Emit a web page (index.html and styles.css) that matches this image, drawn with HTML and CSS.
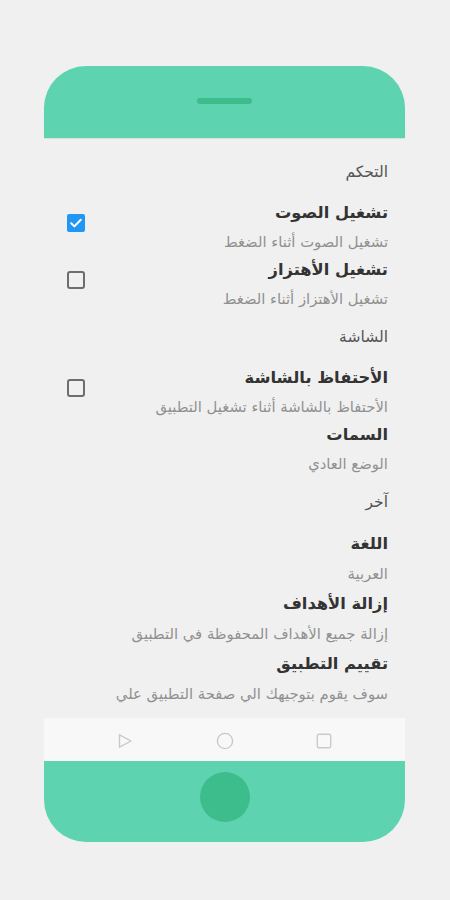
FILE: index.html
```html
<!DOCTYPE html>
<html lang="ar">
<head>
<meta charset="utf-8">
<title>الإعدادات</title>
<link rel="stylesheet" href="styles.css">
</head>
<body>
<div class="phone">
  <div class="top">
    <div class="speaker"></div>
  </div>
  <div class="screen" dir="rtl">
    <div class="cat">التحكم</div>
    <div class="item">
      <div class="texts">
        <div class="title">تشغيل الصوت</div>
        <div class="sub">تشغيل الصوت أثناء الضغط</div>
      </div>
      <span class="check checked">
        <svg viewBox="0 0 18 18" width="18" height="18"><path d="M4.2 9.3l3.2 3.1 6.4-6.6" fill="none" stroke="#fff" stroke-width="2" stroke-linecap="round" stroke-linejoin="round"/></svg>
      </span>
    </div>
    <div class="item">
      <div class="texts">
        <div class="title">تشغيل الأهتزاز</div>
        <div class="sub">تشغيل الأهتزاز أثناء الضغط</div>
      </div>
      <span class="check"></span>
    </div>

    <div class="cat">الشاشة</div>
    <div class="item">
      <div class="texts">
        <div class="title">الأحتفاظ بالشاشة</div>
        <div class="sub">الأحتفاظ بالشاشة أثناء تشغيل التطبيق</div>
      </div>
      <span class="check"></span>
    </div>
    <div class="item">
      <div class="texts">
        <div class="title">السمات</div>
        <div class="sub">الوضع العادي</div>
      </div>
    </div>

    <div class="cat">آخر</div>
    <div class="item tall">
      <div class="texts">
        <div class="title">اللغة</div>
        <div class="sub">العربية</div>
      </div>
    </div>
    <div class="item tall">
      <div class="texts">
        <div class="title">إزالة الأهداف</div>
        <div class="sub">إزالة جميع الأهداف المحفوظة في التطبيق</div>
      </div>
    </div>
    <div class="item tall">
      <div class="texts">
        <div class="title">تقييم التطبيق</div>
        <div class="sub">سوف يقوم بتوجيهك الي صفحة التطبيق علي</div>
      </div>
    </div>
  </div>
  <div class="nav">
    <svg class="nav-icon" viewBox="0 0 16 16" width="16" height="16"><path d="M2.5 1.8 L14 8 L2.5 14.2 Z" fill="none" stroke="#c9c9c9" stroke-width="1.4" stroke-linejoin="round"/></svg>
    <svg class="nav-icon" viewBox="0 0 18 18" width="18" height="18"><circle cx="9" cy="9" r="7.6" fill="none" stroke="#c9c9c9" stroke-width="1.4"/></svg>
    <svg class="nav-icon" viewBox="0 0 16 16" width="16" height="16"><rect x="1.3" y="1.3" width="13.4" height="13.4" rx="1.6" fill="none" stroke="#c9c9c9" stroke-width="1.4"/></svg>
  </div>
  <div class="bottom">
    <div class="home"></div>
  </div>
</div>
</body>
</html>
```
FILE: styles.css
```css
html, body {
  margin: 0;
  padding: 0;
  background: #f0f0f0;
}
body {
  font-family: "DejaVu Sans", sans-serif;
  padding-top: 66px;
}
.phone {
  margin-left: 44px;
  width: 361px;
  display: flex;
  flex-direction: column;
}
.top {
  height: 72px;
  background: #5ed3b0;
  border-radius: 42px 42px 0 0;
  display: flex;
  justify-content: center;
  padding-top: 32px;
  box-sizing: border-box;
  box-shadow: 0 1px 1px rgba(0,0,0,0.08);
  position: relative;
  z-index: 1;
}
.speaker {
  width: 55px;
  height: 6px;
  border-radius: 3px;
  background: #3dbd8b;
}
.screen {
  height: 580px;
  background: #f0f0f0;
  padding: 10px 17px 0 23px;
  box-sizing: border-box;
  overflow: hidden;
}
.cat {
  font-size: 15.5px;
  line-height: 24px;
  color: #555;
  padding: 12px 0 15px;
}
.item {
  display: flex;
  align-items: flex-start;
}
.texts {
  flex: 1;
}
.title {
  font-size: 16.3px;
  line-height: 28px;
  color: #333;
  font-weight: bold;
}
.sub {
  font-size: 14.8px;
  line-height: 29px;
  color: #909090;
}
.tall .title,
.tall .sub {
  line-height: 30px;
}
.check {
  width: 18px;
  height: 18px;
  box-sizing: border-box;
  border: 2px solid #6d6d6d;
  border-radius: 3px;
  margin-top: 15px;
  flex: none;
  display: flex;
  align-items: center;
  justify-content: center;
}
.check.checked {
  background: #2196f3;
  border: none;
  border-radius: 2px;
}
.nav {
  height: 43px;
  background: #f8f8f8;
  display: flex;
  align-items: center;
  justify-content: space-between;
  padding: 2px 73px 0;
  box-sizing: border-box;
}
.bottom {
  height: 81px;
  background: #5ed3b0;
  border-radius: 0 0 42px 42px;
  display: flex;
  justify-content: center;
  padding-top: 11px;
  box-sizing: border-box;
}
.home {
  width: 50px;
  height: 50px;
  border-radius: 50%;
  background: #3dbd8b;
}
```
